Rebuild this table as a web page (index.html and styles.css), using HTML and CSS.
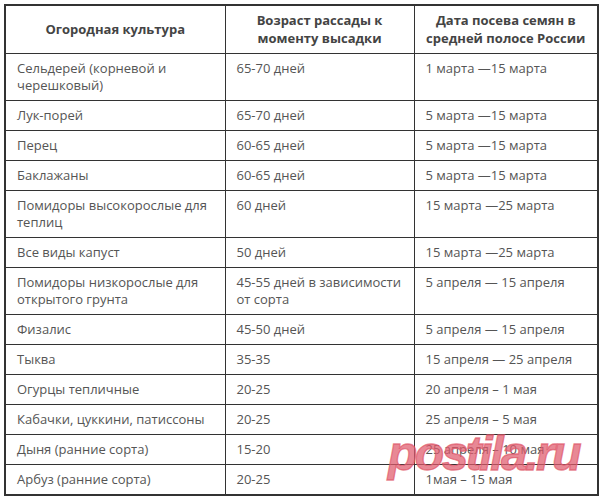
FILE: index.html
```html
<!DOCTYPE html>
<html lang="ru">
<head>
<meta charset="utf-8">
<link rel="stylesheet" href="styles.css">
</head>
<body>
<div class="wrap">
<table class="tbl">
<colgroup><col class="c1"><col class="c2"><col class="c3"></colgroup>
<thead>
<tr><th>Огородная культура</th><th>Возраст рассады к моменту высадки</th><th>Дата посева семян в средней полосе России</th></tr>
</thead>
<tbody>
<tr><td>Сельдерей (корневой и черешковый)</td><td>65-70 дней</td><td>1 марта —15 марта</td></tr>
<tr><td>Лук-порей</td><td>65-70 дней</td><td>5 марта —15 марта</td></tr>
<tr><td>Перец</td><td>60-65 дней</td><td>5 марта —15 марта</td></tr>
<tr><td>Баклажаны</td><td>60-65 дней</td><td>5 марта —15 марта</td></tr>
<tr><td>Помидоры высокорослые для теплиц</td><td>60 дней</td><td>15 марта —25 марта</td></tr>
<tr><td>Все виды капуст</td><td>50 дней</td><td>15 марта —25 марта</td></tr>
<tr><td>Помидоры низкорослые для открытого грунта</td><td>45-55 дней в зависимости от сорта</td><td>5 апреля — 15 апреля</td></tr>
<tr><td>Физалис</td><td>45-50 дней</td><td>5 апреля — 15 апреля</td></tr>
<tr><td>Тыква</td><td>35-35</td><td>15 апреля — 25 апреля</td></tr>
<tr><td>Огурцы тепличные</td><td>20-25</td><td>20 апреля – 1 мая</td></tr>
<tr><td>Кабачки, цуккини, патиссоны</td><td>20-25</td><td>25 апреля – 5 мая</td></tr>
<tr><td>Дыня (ранние сорта)</td><td>15-20</td><td>25 апреля – 10 мая</td></tr>
<tr><td>Арбуз (ранние сорта)</td><td>20-25</td><td>1мая – 15 мая</td></tr>
</tbody>
</table>
<span class="mark">postila.ru</span>
</div>
</body>
</html>
```
FILE: styles.css
```css
html, body {
  margin: 0;
  padding: 0;
  background: #fff;
}
body {
  padding: 4px 0 0 4px;
}
.wrap {
  position: relative;
  width: 593px;
}
.tbl {
  border-collapse: collapse;
  table-layout: fixed;
  width: 593px;
  border: 2px solid #333;
  font-family: "Open Sans", "Noto Sans", sans-serif;
  font-size: 13px;
  color: #555;
}
.c1 { width: 220px; }
.c2 { width: 189px; }
.c3 { width: 184px; }
.tbl th, .tbl td {
  border: 1px solid #333;
  vertical-align: top;
  text-align: left;
}
.tbl th {
  font-weight: 700;
  color: #444;
  text-align: center;
  vertical-align: middle;
  line-height: 18px;
  padding: 5px 8px 6px;
  height: 36px;
}
.tbl td {
  line-height: 17px;
  padding: 6px 10px 6px 11px;
}
.mark {
  position: absolute;
  left: 384px;
  top: 426px;
  font-family: "Liberation Sans", Arial, sans-serif;
  font-weight: 700;
  font-style: italic;
  font-size: 48px;
  letter-spacing: -2.5px;
  color: rgba(224, 90, 108, 0.74);
  -webkit-text-stroke: 1.3px rgba(224, 90, 108, 0.74);
  line-height: 1;
  pointer-events: none;
}
```
